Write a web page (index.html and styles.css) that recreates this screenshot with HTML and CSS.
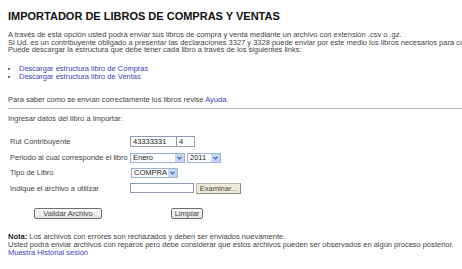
FILE: index.html
```html
<!DOCTYPE html>
<html lang="es">
<head>
    <meta charset="UTF-8">
    <title>Importador de libros de compras y ventas</title>
    <link rel="stylesheet" href="styles.css">
</head>
<body>
    <div class="page">
        <h1 class="title">IMPORTADOR DE LIBROS DE COMPRAS Y VENTAS</h1>

        <p class="intro">
            A través de esta opción usted podrá enviar sus libros de compra y venta mediante un archivo con extensión .csv o .gz.<br>
            Si Ud. es un contribuyente obligado a presentar las declaraciones 3327 y 3328 puede enviar por este medio los libros necesarios para cumplir con esta obligación.<br>
            Puede descargar la estructura que debe tener cada libro a través de los siguientes links:
        </p>

        <ul class="downloads">
            <li><a href="#">Descargar estructura libro de Compras</a></li>
            <li><a href="#">Descargar estructura libro de Ventas</a></li>
        </ul>

        <p class="help">Para saber como se envían correctamente los libros revise <a href="#">Ayuda</a>.</p>

        <hr class="divider">

        <p class="lead">Ingresar datos del libro a Importar:</p>

        <!--formulario de carga-->
        <form class="import-form">
            <div class="row row-tall">
                <label class="label">Rut Contribuyente</label>
                <div class="fields">
                    <input class="input input-rut" type="text" value="43333331">
                    <input class="input input-dv" type="text" value="4">
                </div>
            </div>
            <div class="row row-tall">
                <label class="label">Periodo al cual corresponde el libro</label>
                <div class="fields">
                    <span class="select select-month">
                        <select><option>Enero</option></select>
                        <span class="arrow"><svg width="5" height="4" viewBox="0 0 5 4"><path d="M0.5 0.8 L2.5 2.8 L4.5 0.8" fill="none" stroke="#3c5d9c" stroke-width="1.2"/></svg></span>
                    </span>
                    <span class="select select-year">
                        <select><option>2011</option></select>
                        <span class="arrow"><svg width="5" height="4" viewBox="0 0 5 4"><path d="M0.5 0.8 L2.5 2.8 L4.5 0.8" fill="none" stroke="#3c5d9c" stroke-width="1.2"/></svg></span>
                    </span>
                </div>
            </div>
            <div class="row">
                <label class="label">Tipo de Libro</label>
                <div class="fields">
                    <span class="select select-type">
                        <select><option>COMPRA</option></select>
                        <span class="arrow"><svg width="5" height="4" viewBox="0 0 5 4"><path d="M0.5 0.8 L2.5 2.8 L4.5 0.8" fill="none" stroke="#3c5d9c" stroke-width="1.2"/></svg></span>
                    </span>
                </div>
            </div>
            <div class="row">
                <label class="label">Indique el archivo a utilizar</label>
                <div class="fields">
                    <input class="input input-file" type="text" readonly>
                    <button class="browse" type="button">Examinar...</button>
                </div>
            </div>

            <div class="actions">
                <button class="btn btn-validate" type="button">Validar Archivo</button>
                <button class="btn btn-clear" type="reset">Limpiar</button>
            </div>
        </form>

        <p class="note">
            <b>Nota:</b> Los archivos con errores son rechazados y deben ser enviados nuevamente.<br>
            Usted podrá enviar archivos con reparos pero debe considerar que estos archivos pueden ser observados en algún proceso posterior.<br>
            <a href="#">Muestra Historial sesión</a>
        </p>
    </div>
</body>
</html>
```

FILE: styles.css
```css
*{
    margin: 0;
    padding: 0;
    box-sizing: border-box;
}
html, body{
    overflow: hidden;
    background: #fff;
}
body{
    font-family: "Liberation Sans", Arial, sans-serif;
    font-size: 7.5px;
    color: #444;
}
a{
    color: #4141b8;
    text-decoration: none;
}

/*contenedor*/
.page{
    width: 680px;
    padding-left: 8px;
}

/*titulo*/
.title{
    margin-top: 10px;
    font-size: 11px;
    line-height: 13px;
    font-weight: bold;
    color: #111;
}

/*textos*/
.intro{
    margin-top: 8px;
    line-height: 7.7px;
}
.downloads{
    margin-top: 11px;
    padding-left: 11px;
    line-height: 8.3px;
}
.downloads li{
    list-style: disc;
}
.help{
    margin-top: 14px;
    line-height: 7.7px;
}
.divider{
    margin-top: 5px;
    border: 0;
    border-top: 1px solid #b5b5b5;
}
.lead{
    margin-top: 6px;
    line-height: 7.7px;
}

/*formulario*/
.import-form{
    margin-top: 10px;
    padding-left: 2px;
}
.row{
    display: flex;
    align-items: center;
    height: 16px;
}
.row-tall{
    height: 17px;
}
.row-tall + .row{
    height: 15px;
}
.label{
    width: 120px;
    color: #444;
}
.fields{
    display: flex;
    align-items: center;
    gap: 2px;
}
.input{
    height: 11px;
    border: 1px solid #8f9cb0;
    background: #fff;
    font-family: inherit;
    font-size: 7.5px;
    color: #222;
    padding: 0 2px;
    outline: none;
}
.input-rut{
    width: 47px;
}
.input-dv{
    width: 18px;
    margin-left: -2px;
    border-left: 0;
}
.input-file{
    width: 64px;
    height: 10px;
}

/*select estilo XP*/
.select{
    position: relative;
    display: inline-block;
    height: 10px;
    border: 1px solid #9fb2cc;
    background: #fff;
}
.select select{
    appearance: none;
    -webkit-appearance: none;
    border: 0;
    background: transparent;
    width: 100%;
    height: 8px;
    font-family: inherit;
    font-size: 7.5px;
    line-height: 8px;
    color: #222;
    padding-left: 2px;
    outline: none;
    display: block;
}
.select .arrow{
    position: absolute;
    top: 0;
    right: 0;
    width: 9px;
    height: 8px;
    background: #c6d6f2;
    display: flex;
    align-items: center;
    justify-content: center;
}
.select-month{
    width: 55px;
}
.select-year{
    width: 34px;
}
.select-type{
    width: 47px;
    margin-left: 1px;
}

/*botones*/
.browse{
    width: 45px;
    height: 11px;
    border: 1px solid #b8b4a2;
    border-right-color: #8d8a7c;
    border-bottom-color: #8d8a7c;
    background: #efebdc;
    font-family: inherit;
    font-size: 7.5px;
    color: #444;
}
.actions{
    display: flex;
    gap: 69px;
    margin-top: 12px;
    padding-left: 24px;
}
.btn{
    height: 11px;
    border: 1px solid #6e6e6e;
    border-radius: 2px;
    background: linear-gradient(#fbfbfb, #e4e4e4);
    font-family: inherit;
    font-size: 7.5px;
    color: #444;
}
.btn-validate{
    width: 68px;
}
.btn-clear{
    width: 32px;
}

/*nota*/
.note{
    margin-top: 14px;
    line-height: 7.8px;
}
.note b{
    color: #222;
}
```
